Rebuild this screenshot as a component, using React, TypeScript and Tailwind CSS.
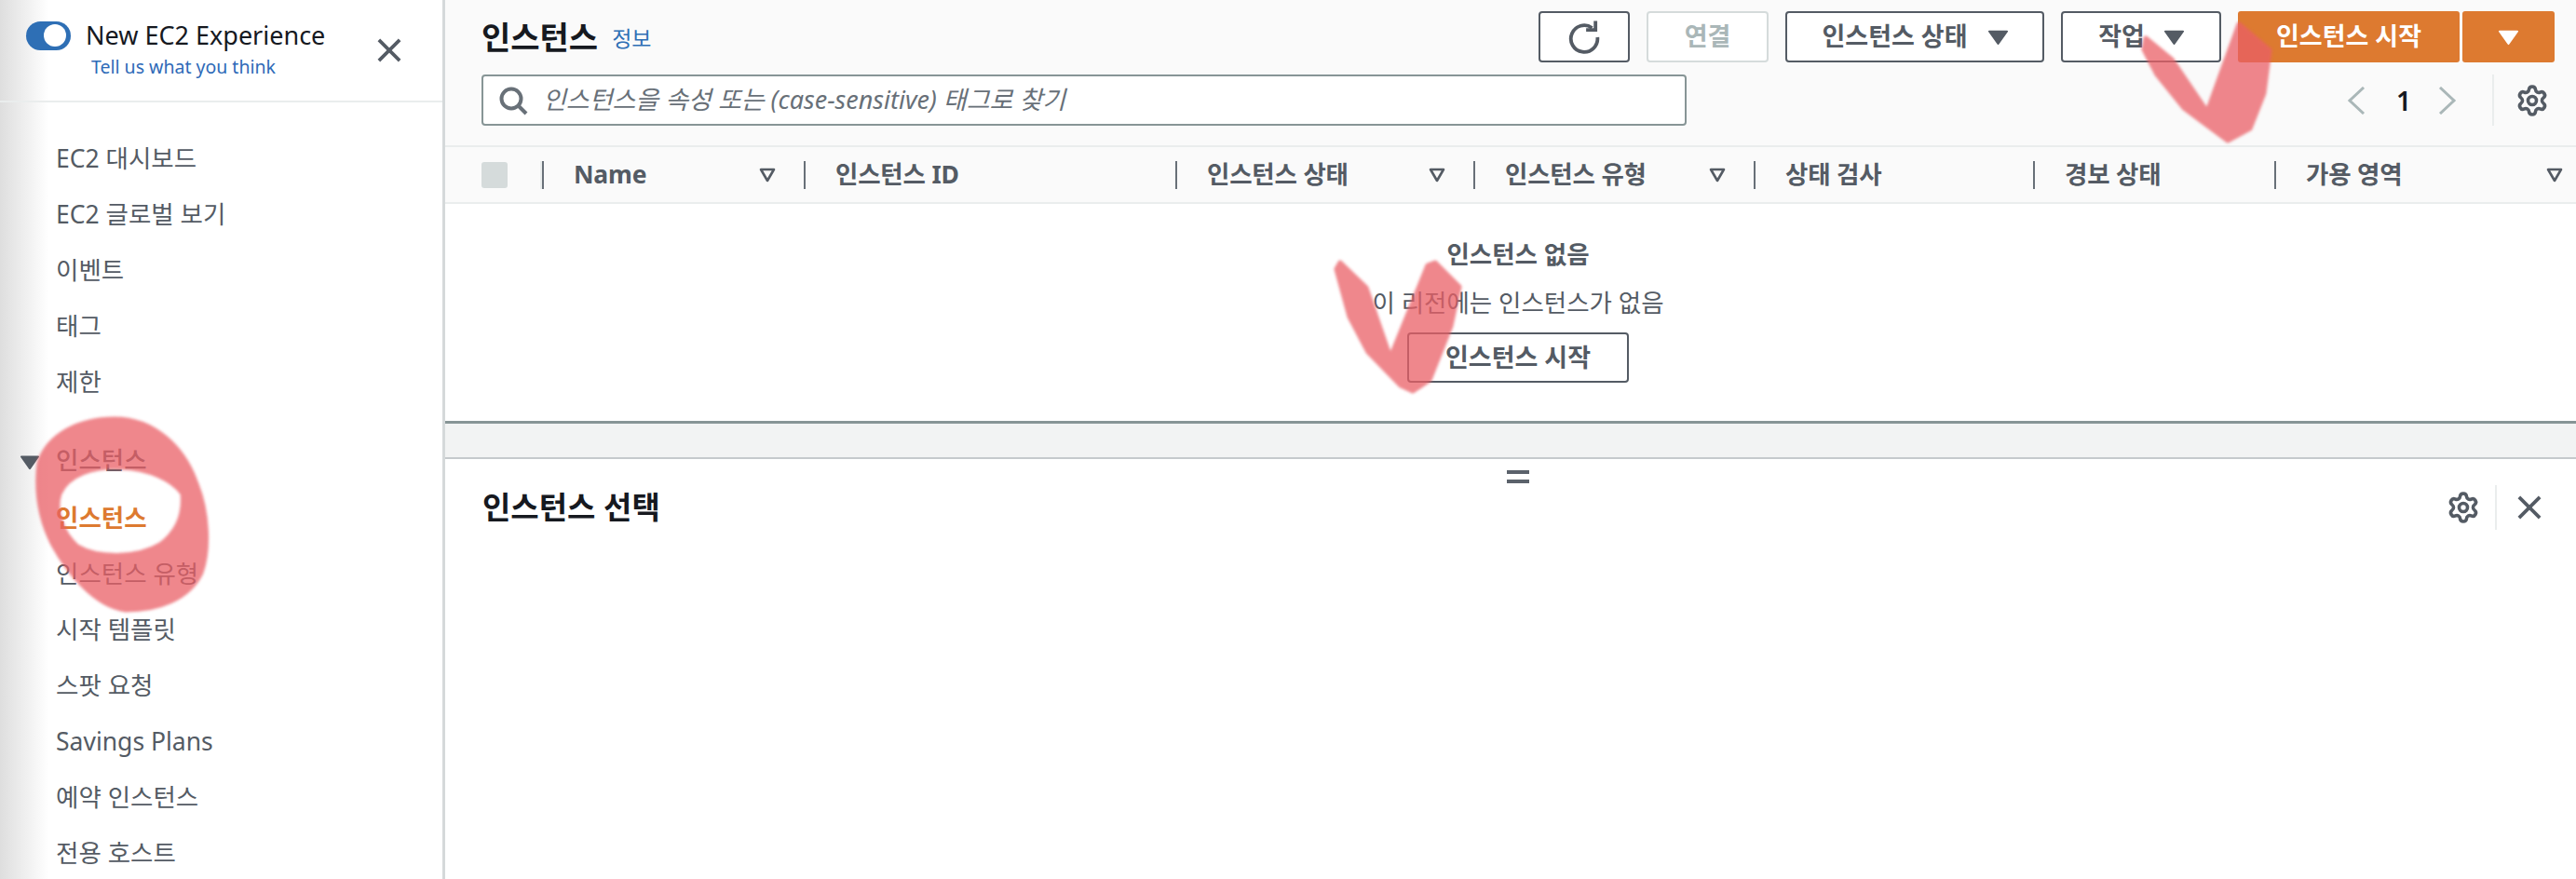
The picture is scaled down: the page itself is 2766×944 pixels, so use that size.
import { Settings } from 'lucide-react';

const navTop = ['EC2 대시보드', 'EC2 글로벌 보기', '이벤트', '태그', '제한'];
const navBottom = ['인스턴스 유형', '시작 템플릿', '스팟 요청', 'Savings Plans', '예약 인스턴스', '전용 호스트'];

function Caret({ className }: { className: string }) {
  return (
    <svg viewBox="0 0 20 17" className={className} fill="currentColor">
      <path d="M1 1.5 h18 a1 1 0 0 1 .8 1.5 L11 15.5 a1.2 1.2 0 0 1 -2 0 L.2 3 A1 1 0 0 1 1 1.5z" />
    </svg>
  );
}

function FilterIcon() {
  return (
    <svg viewBox="0 0 18 16" className="w-[18px] h-[16px] text-[#545b64] shrink-0" fill="none" stroke="currentColor" strokeWidth="2.6">
      <path d="M2 2 h14 L9 14 z" strokeLinejoin="round" />
    </svg>
  );
}

function CloseIcon({ className }: { className: string }) {
  return (
    <svg viewBox="0 0 28 28" className={className} fill="none" stroke="currentColor" strokeWidth="4">
      <path d="M2 2 L26 26 M26 2 L2 26" />
    </svg>
  );
}

function Column({ w, label, filter, pr = 'pr-[30px]' }: { w: string; label: string; filter?: boolean; pr?: string }) {
  return (
    <div className={`${w} flex items-center h-full ${pr}`}>
      <div className="w-[2px] h-[30px] bg-[#687078] shrink-0" />
      <span className="ml-[32px] text-[26.5px] font-bold tracking-[-0.2px] text-[#545b64] whitespace-nowrap">{label}</span>
      {filter && <div className="ml-auto"><FilterIcon /></div>}
    </div>
  );
}

export default function App() {
  return (
    <div lang="ko" className="relative flex w-[2766px] h-[944px] overflow-hidden bg-white font-['Noto_Sans','Noto_Sans_CJK_KR',sans-serif] text-[#545b64]">
      {/* side navigation */}
      <aside className="w-[478px] h-full shrink-0 border-r-[3px] border-[#d5d9da] bg-gradient-to-r from-[#dedede] via-white via-[11%] to-white">
        <div className="relative h-[110px] border-b-2 border-[#eaeded]">
          <div className="flex items-center gap-[16px] pl-[28px] pt-[22px]">
            <div className="flex items-center justify-end w-[48px] h-[31px] rounded-full bg-[#2e6fb5] pr-[5px]">
              <div className="w-[24px] h-[24px] rounded-full bg-white" />
            </div>
            <span className="text-[27px] leading-[32px] text-[#16191f] whitespace-nowrap">New EC2 Experience</span>
          </div>
          <div className="pl-[98px] mt-[5px] text-[19.5px] leading-[26px] text-[#2e6ab8]">Tell us what you think</div>
          <div className="absolute left-[405px] top-[41px]">
            <CloseIcon className="w-[26px] h-[26px] text-[#545b64]" />
          </div>
        </div>
        <nav className="pt-[31px] pl-[60px] text-[26.5px]">
          {navTop.map((item) => (
            <div key={item} className="h-[60px] flex items-center whitespace-nowrap">{item}</div>
          ))}
          <div className="h-[60px] mt-[24px] flex items-center font-medium relative">
            <Caret className="absolute left-[-38px] top-[23px] w-[20px] h-[17px] text-[#545b64]" />
            인스턴스
          </div>
          <div className="h-[60px] mt-[2px] flex items-center font-semibold text-[#dd7a30]">인스턴스</div>
          {navBottom.map((item) => (
            <div key={item} className="h-[60px] flex items-center whitespace-nowrap">{item}</div>
          ))}
        </nav>
      </aside>

      <main className="flex-1 flex flex-col min-w-0">
        {/* toolbar */}
        <section className="h-[156px] bg-[#fafafa] pl-[39px] pr-[23px] pt-[12px]">
          <div className="flex items-center h-[55px]">
            <h1 className="text-[34px] font-bold text-[#16191f] leading-none">인스턴스</h1>
            <span className="ml-[15px] mt-[4px] text-[23px] text-[#2e6fb5]">정보</span>
            <div className="ml-auto flex items-center h-full text-[27px] font-semibold">
              <button className="w-[98px] h-full flex items-center justify-center border-2 border-[#545b64] rounded-[4px] bg-white">
                <svg viewBox="0 0 34 34" className="w-[36px] h-[36px]" fill="none" stroke="currentColor" strokeWidth="3.6">
                  <path d="M25 7.5 A13.5 13.5 0 1 0 30.5 17" />
                  <path d="M19 9.5 h9.5 v-9" />
                </svg>
              </button>
              <button className="ml-[18px] w-[131px] h-full flex items-center justify-center border-2 border-[#d5dbdb] rounded-[4px] bg-white text-[#aab7b8]">연결</button>
              <button className="ml-[18px] w-[278px] h-full flex items-center justify-center gap-[22px] border-2 border-[#545b64] rounded-[4px] bg-white">
                인스턴스 상태
                <Caret className="w-[21px] h-[18px]" />
              </button>
              <button className="ml-[18px] w-[172px] h-full flex items-center justify-center gap-[21px] border-2 border-[#545b64] rounded-[4px] bg-white">
                작업
                <Caret className="w-[21px] h-[18px]" />
              </button>
              <button className="ml-[18px] w-[238px] h-full flex items-center justify-center rounded-[3px] bg-[#dd7a30] text-white">인스턴스 시작</button>
              <button className="ml-[3px] w-[99px] h-full flex items-center justify-center rounded-[3px] bg-[#dd7a30] text-white">
                <Caret className="w-[21px] h-[18px]" />
              </button>
            </div>
          </div>
          <div className="flex items-center h-[55px] mt-[13px]">
            <div className="w-[1294px] h-full flex items-center border-2 border-[#879596] rounded-[4px] bg-white pl-[16px]">
              <svg viewBox="0 0 32 32" className="w-[32px] h-[32px] shrink-0 text-[#687078]" fill="none" stroke="currentColor" strokeWidth="4">
                <circle cx="14" cy="14" r="10.5" />
                <path d="M21.5 21.5 L30 30" />
              </svg>
              <span className="ml-[16px] text-[27px] italic text-[#687078] whitespace-nowrap">인스턴스을 속성 또는 (case-sensitive) 태그로 찾기</span>
            </div>
            <div className="ml-auto flex items-center h-full">
              <svg viewBox="0 0 20 30" className="w-[20px] h-[30px] text-[#aab7b8]" fill="none" stroke="currentColor" strokeWidth="3">
                <path d="M18 1 L3 15 L18 29" />
              </svg>
              <span className="ml-[33px] w-[16px] text-[28px] font-semibold text-[#16191f]">1</span>
              <svg viewBox="0 0 20 30" className="ml-[29px] w-[20px] h-[30px] text-[#aab7b8]" fill="none" stroke="currentColor" strokeWidth="3">
                <path d="M2 1 L17 15 L2 29" />
              </svg>
              <div className="ml-[38px] w-[2px] h-[55px] bg-[#eaeded]" />
              <Settings className="ml-[23px] w-[36px] h-[36px] text-[#545b64]" strokeWidth={2.4} />
              <div className="w-[6px]" />
            </div>
          </div>
        </section>

        {/* table header */}
        <div className="h-[63px] flex items-center bg-[#fafafa] border-y-2 border-[#eaeded] shrink-0">
          <div className="w-[104px] h-full flex items-center pl-[39px] pr-0">
            <div className="w-[28px] h-[28px] rounded-[3px] bg-[#d5dbdb]" />
            <div className="ml-auto w-[2px] h-[30px] bg-[#eaeded]" />
          </div>
          <Column w="w-[281px]" label="Name" filter />
          <Column w="w-[399px]" label="인스턴스 ID" />
          <Column w="w-[320px]" label="인스턴스 상태" filter />
          <Column w="w-[301px]" label="인스턴스 유형" filter />
          <Column w="w-[300px]" label="상태 검사" />
          <Column w="w-[259px]" label="경보 상태" />
          <Column w="w-[324px]" label="가용 영역" filter pr="pr-[14px]" />
        </div>

        {/* empty state */}
        <section className="h-[233px] shrink-0 flex flex-col items-center pl-[16px] pt-[36px]">
          <div className="text-[26.5px] leading-[36px] font-semibold">인스턴스 없음</div>
          <div className="mt-[16px] text-[26.5px] leading-[36px]">이 리전에는 인스턴스가 없음</div>
          <button className="mt-[14px] w-[238px] h-[54px] border-2 border-[#545b64] rounded-[4px] text-[27px] font-semibold">인스턴스 시작</button>
        </section>

        {/* splitter */}
        <div className="h-[41px] shrink-0 bg-[#f2f3f3] border-t-[3px] border-b-[2px] border-t-[#879596] border-b-[#c5c9cc]" />

        {/* split panel */}
        <section className="flex-1 flex flex-col">
          <div className="flex flex-col items-center gap-[6px] pt-[12px] pl-[16px]">
            <div className="w-[24px] h-[4px] bg-[#5b626b]" />
            <div className="w-[24px] h-[4px] bg-[#5b626b]" />
          </div>
          <div className="flex items-center h-[48px] mt-[2px] pl-[40px] pr-[37px]">
            <h2 className="text-[33px] font-semibold text-[#16191f]">인스턴스 선택</h2>
            <Settings className="ml-auto w-[36px] h-[36px] text-[#545b64]" strokeWidth={2.4} />
            <div className="ml-[16px] w-[2px] h-[48px] bg-[#eaeded]" />
            <CloseIcon className="ml-[22px] w-[26px] h-[26px] text-[#545b64]" />
          </div>
        </section>
      </main>

      {/* red pen marks drawn over the screenshot */}
      <svg
        viewBox="0 0 2766 944"
        className="absolute inset-0 w-[2766px] h-[944px] pointer-events-none blur-[1.5px] opacity-75"
        fill="#ea5f66"
        stroke="#ea5f66"
        strokeWidth="5"
        strokeLinejoin="round"
      >
        <path
          fillRule="evenodd"
          d="M123 450 C165 450 197 480 211 520 C223 550 225 590 216 615 C203 643 170 655 135 655 C100 650 72 612 57 585 C44 560 38 530 42 497 C52 467 85 450 123 450 Z
             M130 502 C100 500 73 510 64 530 C58 548 66 572 83 587 C105 600 147 600 172 585 C192 570 198 550 196 530 C185 515 160 503 130 502 Z"
        />
        <path d="M2304 41 L2332 64 L2370 120 L2404 26 L2437 54 L2431 100 L2416 138 L2392 151 L2345 116 L2316 80 L2302 53 Z" />
        <path d="M1439 282 L1467 309 L1493 384 L1533 285 L1541 282 L1567 308 L1558 350 L1535 408 L1517 420 L1504 414 L1469 378 L1449 340 L1435 289 Z" />
      </svg>
    </div>
  );
}
